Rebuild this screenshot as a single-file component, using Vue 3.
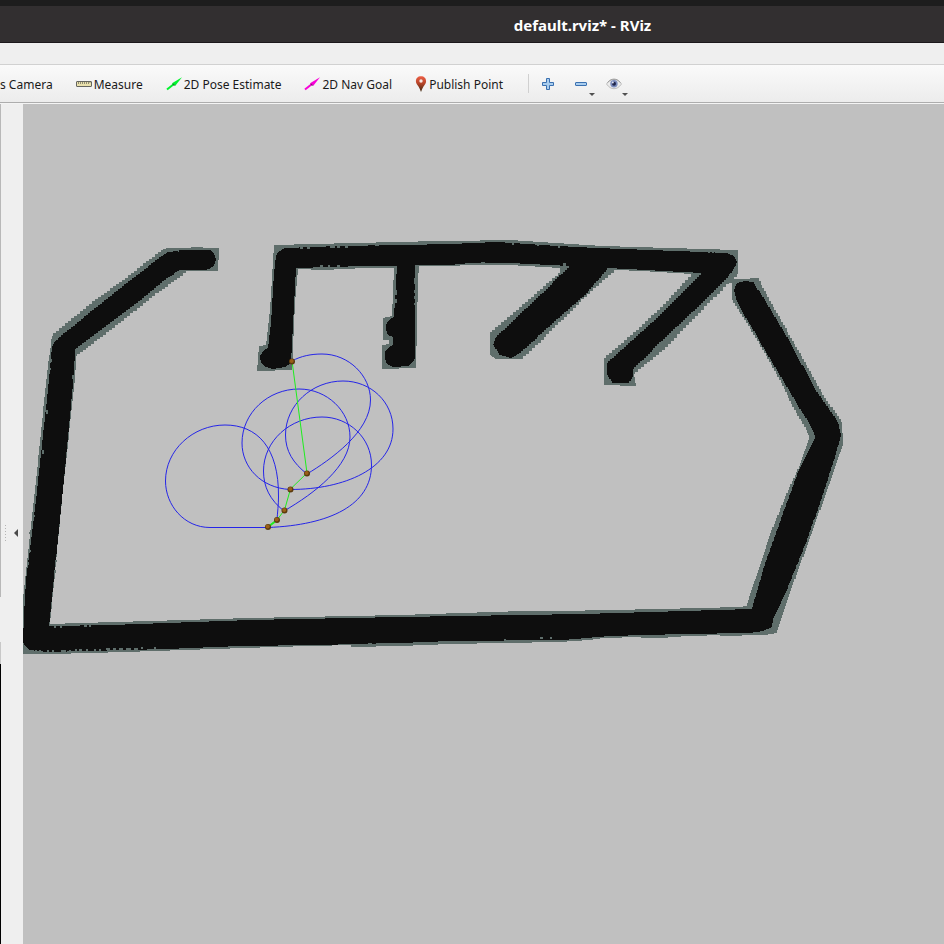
<script setup>
const tools = [
  { id: 'measure', label: 'Measure' },
  { id: 'pose', label: '2D Pose Estimate' },
  { id: 'goal', label: '2D Nav Goal' },
  { id: 'point', label: 'Publish Point' },
]

// Straight runs stay as they are; sloped runs become grid-cell stairs.
function gridOutline(points, step = 3) {
  const out = []
  points.forEach(([x1, y1], i) => {
    const [x2, y2] = points[(i + 1) % points.length]
    const dx = x2 - x1
    const dy = y2 - y1
    out.push([x1, y1])
    if (Math.min(Math.abs(dx), Math.abs(dy)) < 5) return
    const n = Math.max(1, Math.round(Math.max(Math.abs(dx), Math.abs(dy)) / step))
    let py = y1
    for (let k = 1; k <= n; k++) {
      const x = Math.round(x1 + (dx * (k - 0.5)) / n)
      const y = Math.round(y1 + (dy * k) / n)
      out.push([x, py], [x, y])
      py = y
    }
  })
  return 'M' + out.map((p) => p.join(' ')).join('L') + 'Z'
}

const halo = [
  [[52,336],[60,328],[97,299],[123,280],[148,261],[162,250],[167,248],[191,248],[191,247],[203,247],[203,248],[219,248],[219,260],[218,260],[218,271],[187,271],[175,280],[157,293],[135,311],[110,330],[87,348],[76,356],[76,363],[75,377],[62,500],[50,624],[80,623],[150,621],[250,618],[400,615],[524,611],[560,611],[660,609],[740,607],[746,606],[751,593],[759,567],[773,527],[787,493],[802,460],[809,437],[808,433],[793,407],[780,380],[763,350],[747,323],[732,300],[732,279],[750,279],[750,278],[758,278],[763,288],[777,313],[798,350],[823,395],[842,422],[843,443],[837,460],[820,510],[803,557],[788,597],[777,633],[765,635],[720,636],[720,635],[668,637],[668,638],[641,638],[641,637],[603,638],[589,640],[560,642],[450,644],[400,646],[351,647],[351,645],[273,647],[126,652],[53,654],[23,654],[23,597],[34,500],[47,373]],
  [[274,245],[313,244],[355,243],[397,242],[438,241],[470,241],[490,240],[510,240],[540,242],[603,246],[737,250],[738,250],[738,274],[733,279],[733,282],[727,284],[715,297],[690,322],[663,350],[634,374],[636,386],[604,385],[604,358],[640,327],[670,298],[692,274],[642,271],[615,270],[603,280],[580,302],[545,337],[522,359],[496,359],[490,355],[490,332],[520,307],[560,273],[560,268],[510,265],[470,265],[450,266],[419,266],[418,280],[416,368],[382,369],[382,345],[389,344],[389,340],[383,340],[383,318],[392,316],[394,268],[365,268],[323,270],[298,269],[295,303],[292,370],[257,371],[259,346],[266,345],[270,310]],
].map((p) => gridOutline(p, 3))

const walls = [
  [[52,347],[55,341],[62,335],[103,302],[133,278],[162,256],[168,252],[178,251],[178,250],[210,250],[214,253],[216,260],[214,266],[209,269],[205,270],[180,270],[167,278],[137,303],[107,325],[87,340],[75,349],[74,373],[63,490],[49,626],[110,625],[250,620],[400,617],[583,614],[752,609],[763,570],[783,513],[800,467],[815,437],[813,430],[793,397],[763,347],[737,302],[734,290],[737,283],[745,281],[753,282],[763,297],[787,337],[817,392],[838,422],[841,435],[835,457],[822,497],[807,540],[788,587],[773,620],[772,627],[763,631],[750,633],[683,634],[610,636],[563,640],[450,641],[400,643],[317,645],[240,646],[167,649],[47,652],[30,650],[25,646],[23,642],[24,615],[26,580],[32,533],[36,500],[49,380]],
  [[276,256],[278,252],[285,248],[340,246],[450,244],[497,242],[558,246],[597,248],[703,252],[727,253],[734,256],[737,262],[735,267],[727,278],[700,305],[670,333],[633,369],[633,377],[628,383],[613,383],[607,375],[607,363],[657,318],[702,273],[608,268],[587,293],[553,323],[520,353],[511,358],[500,355],[493,345],[496,337],[533,302],[570,266],[510,263],[470,263],[450,265],[415,265],[415,358],[413,362],[408,366],[393,367],[387,364],[385,359],[385,352],[388,348],[393,345],[393,337],[388,335],[386,330],[386,325],[389,320],[394,317],[397,266],[365,266],[296,268],[292,343],[291,363],[285,367],[273,369],[266,367],[261,363],[260,356],[264,350],[268,348],[271,323],[274,273]],
].map((p) => gridOutline(p, 2))

// Loose halo cells biting into the wall edge: x, y, width, height.
const cells = [
  [35,650,2,2],[39,650,2,2],[47,650,2,2],[52,650,2,2],[61,650,5,2],[69,650,2,2],[75,649,2,2],[79,649,3,2],[86,649,2,2],[94,649,2,2],[99,649,2,2],[106,648,4,2],[113,648,3,2],[119,648,4,2],[126,648,5,2],[134,648,4,2],[141,647,2,2],[154,647,2,2],
  [54,626,2,2],[60,626,2,2],[84,625,3,2],[89,625,2,2],[475,641,3,2],[504,639,2,2],[540,637,3,2],[550,637,2,2],[368,643,4,2],[376,643,4,2],
  [519,613,2,2],[524,613,2,2],[528,613,3,2],[533,613,2,2],[538,613,2,2],[543,613,3,2],
  [300,247,3,2],[307,247,3,2],[330,246,5,2],[337,246,3,2],[345,246,3,2],[358,245,4,1],[375,245,4,1],[408,244,4,1],[422,244,5,1],
  [320,265,3,2],[328,265,2,2],[337,265,3,2],[395,290,2,5],[395,299,2,4],[414,278,2,6],[414,290,2,3],[414,296,2,3],[414,303,2,2],
  [29,532,3,2],[28,550,3,2],[27,562,2,3],[55,560,2,2],[54,570,2,3],[32,515,3,2],[50,359,2,3],[49,368,2,2],[72,375,2,4],[46,410,2,4],[42,450,2,4],
  [512,241,2,4],[537,243,2,3],[558,244,2,4],[708,251,2,2],[712,251,2,2],[178,249,1,3],[481,262,4,2],[563,263,3,3],
]

const tracks = [
  'M292 361C301 356 311 354 322 354C349 354 370.500 376 370.500 400C370.500 432 330 460 307 474',
  'M307 474C293 463 285.500 451 285.500 435C285.500 405 312 381 343 381C371 381 393 402 393 429C393 468 345 489.500 290 489.500',
  'M290 489.500C261 488 242 467 242 443C242 413 268 389 299 389C327 389 350 411 350 437C350 466 315 493 284 511',
  'M284 511C270 500 263.500 487 263.500 471C263.500 441 290 417 322 417C349 417 371.500 438 371.500 465C371.500 505 330 525 268 527.500',
  'M268 527.500H210C184 527.500 165.500 505 165.500 481C165.500 450 193 425 225 425C257 425 279 447 278.500 497C278.500 505 277.500 512 277 520',
]

const nodes = [[292,361],[307,473],[290.5,489],[284.5,510],[277,519.5],[268,526.5]]
</script>

<template>
  <div class="window">
    <header class="titlebar"><h1>default.rviz* - RViz</h1></header>
    <div class="menubar"></div>
    <nav class="toolbar" aria-label="Tools">
      <button type="button" class="tool"><span>s Camera</span></button>
      <button v-for="tool in tools" :key="tool.id" type="button" class="tool" :class="tool.id">
        <svg v-if="tool.id === 'measure'" width="16" height="16" viewBox="0 0 16 16">
          <rect x=".5" y="5.500" width="15" height="5" rx=".5" fill="#e9e0ac" stroke="#65655f" />
          <path d="M2.500 6v2M4.500 6v2M6.500 6v2M8.500 6v2M10.500 6v2M12.500 6v2M14 6v1" stroke="#8f8c71" />
        </svg>
        <svg v-else-if="tool.id === 'point'" width="12" height="16" viewBox="0 0 12 16">
          <defs>
            <linearGradient id="pin" x2="0" y2="1">
              <stop offset="0" stop-color="#ed5f45" />
              <stop offset=".45" stop-color="#b64428" />
              <stop offset="1" stop-color="#38260f" />
            </linearGradient>
          </defs>
          <path d="M6 .3C2.800.3.900 2.400.900 5.200c0 2 1.400 3.600 2.600 5.400C4.500 12.300 5.200 14 6 16c.8-2 1.500-3.700 2.500-5.400 1.200-1.800 2.600-3.400 2.600-5.400C11.100 2.400 9.200.3 6 .3z" fill="url(#pin)" />
          <circle cx="6" cy="5" r="1.700" fill="#f6e9e4" />
        </svg>
        <svg v-else width="16" height="16" viewBox="0 0 16 16">
          <path d="M1 13.500 8 8" fill="none" stroke="currentColor" stroke-width="2" />
          <path d="M6 7.200 16 1.300 9.300 9.700z" fill="currentColor" />
          <path d="m6.500 7 3 2.500-1.500.5-1.500-1.500z" fill="#000" opacity=".4" />
        </svg>
        <span>{{ tool.label }}</span>
      </button>
      <span class="divider"></span>
      <button type="button" class="mini" aria-label="Add tool">
        <svg width="14" height="14" viewBox="0 0 14 14">
          <path d="M5.500 1.500h3v4h4v3h-4v4h-3v-4h-4v-3h4z" fill="#a9cdee" stroke="#3a70b0" stroke-linejoin="round" />
        </svg>
      </button>
      <button type="button" class="mini" aria-label="Remove tool">
        <svg width="14" height="14" viewBox="0 0 14 14">
          <rect x="1.500" y="5.500" width="11" height="3" rx=".5" fill="#a9cdee" stroke="#3a70b0" />
        </svg>
        <i class="caret"></i>
      </button>
      <button type="button" class="mini" aria-label="Tool visibility">
        <svg width="16" height="14" viewBox="0 0 16 14">
          <path d="M.5 7C3 3.500 5.500 2.300 8 2.300S13 3.500 15.500 7C13 10.500 10.500 11.700 8 11.700S3 10.500.5 7z" fill="#ececec" stroke="#bdbdbd" />
          <path d="M1.500 5.500C4 2.800 6 2.200 8 2.200s4 .6 6.500 3.300" fill="none" stroke="#9c9c9c" />
          <circle cx="8" cy="6.800" r="3.700" fill="#7b8cbd" />
          <circle cx="8" cy="6.800" r="2" fill="#20264b" />
          <circle cx="6.800" cy="5.500" r="1" fill="#dfe5f5" />
        </svg>
        <i class="caret"></i>
      </button>
    </nav>
    <main class="workspace">
      <div class="dock-edge"><span class="panel"></span><span class="gap"></span><span class="panel short"></span><span class="image"></span></div>
      <button type="button" class="splitter" aria-label="Collapse left panel">
        <svg width="22" height="20" viewBox="0 0 22 20">
          <path d="M4.500 2v17" stroke="#b4b4b4" stroke-dasharray="1 2" />
          <path d="M17 6v8l-4-4z" fill="#4a4a4a" />
        </svg>
      </button>
      <svg class="map" viewBox="23 104 921 840" preserveAspectRatio="xMinYMin slice" role="img" aria-label="Occupancy map">
        <g shape-rendering="crispEdges">
          <path v-for="d in halo" :key="d" :d="d" fill="#5f6e6b" />
          <path v-for="d in walls" :key="d" :d="d" fill="#0e0e0e" />
          <rect v-for="(c, i) in cells" :key="i" :x="c[0]" :y="c[1]" :width="c[2]" :height="c[3]" fill="#5f6e6b" />
        </g>
        <path v-for="d in tracks" :key="d" :d="d" class="track" />
        <path d="M292 361 307 473 290.500 489 284.500 510 277 520 268 527" class="link" />
        <path d="M277 520 268 527" class="link heavy" />
        <g v-for="n in nodes" :key="n[0]">
          <circle :cx="n[0]" :cy="n[1] + 0.5" r="3" fill="#5b3a0d" />
          <circle :cx="n[0] - 0.3" :cy="n[1]" r="2" fill="#9a5f17" />
        </g>
      </svg>
    </main>
  </div>
</template>

<style>
body { margin: 0; }
</style>

<style scoped>
.window {
  display: flex;
  flex-direction: column;
  height: 100vh;
  overflow: hidden;
  background: #efefef;
  color: #1a1a1a;
  font: 12px/16px "Noto Sans", "Open Sans", sans-serif;
}
.titlebar {
  display: flex;
  align-items: center;
  justify-content: center;
  height: 36px;
  padding-left: 221px;
  border-top: 6px solid #1d1d1d;
  border-bottom: 1px solid #1c181b;
  background: #322f30;
}
h1 {
  margin: 0;
  padding-top: 2px;
  color: #fff;
  font: bold 15px/20px "Noto Sans", "Open Sans", sans-serif;
}
.menubar {
  height: 21px;
  border-bottom: 1px solid #d1d1d1;
}
.toolbar {
  display: flex;
  align-items: center;
  height: 37px;
  border-bottom: 1px solid #adadad;
  box-shadow: 0 1px #f4f4f4;
  background: linear-gradient(#fafafa, #ececec);
}
.tool,
.mini,
.splitter {
  margin: 0;
  padding: 0;
  border: 0;
  background: none;
  color: inherit;
  font: inherit;
}
.tool {
  display: flex;
  align-items: center;
  gap: 2px;
  margin-right: 23px;
  white-space: nowrap;
}
.tool svg { flex: none; }
.tool span { padding-top: 2px; }
.pose svg { color: #00f22d; }
.goal svg { color: #f800d8; }
.divider {
  width: 1px;
  height: 19px;
  margin: 0 12px 0 2px;
  background: #d0d0d0;
}
.mini {
  position: relative;
  display: flex;
  justify-content: center;
  width: 14px;
  margin-right: 19px;
}
.mini svg { flex: none; }
.caret {
  position: absolute;
  right: -7px;
  bottom: -5px;
  border: 3px solid transparent;
  border-top-color: #505050;
  border-bottom: 0;
}
.workspace {
  display: grid;
  grid-template-columns: 1px 22px 1fr;
  flex: 1;
  min-height: 0;
  padding-top: 1px;
}
.dock-edge {
  display: grid;
  grid-template-rows: 493fr 45fr 22fr 280fr;
}
.panel { background: #b8b8b8; }
.short { background: #c8c8c8; }
.image { background: #000; }
.splitter {
  display: flex;
  align-items: center;
  padding-top: 18px;
}
.map {
  display: block;
  width: 100%;
  height: 100%;
  min-height: 0;
  background: #c0c0c0;
}
.track {
  fill: none;
  stroke: #2525e8;
  stroke-width: 1;
}
.link {
  fill: none;
  stroke: #1eee1e;
  stroke-width: 1;
}
.heavy { stroke-width: 2; }
</style>
